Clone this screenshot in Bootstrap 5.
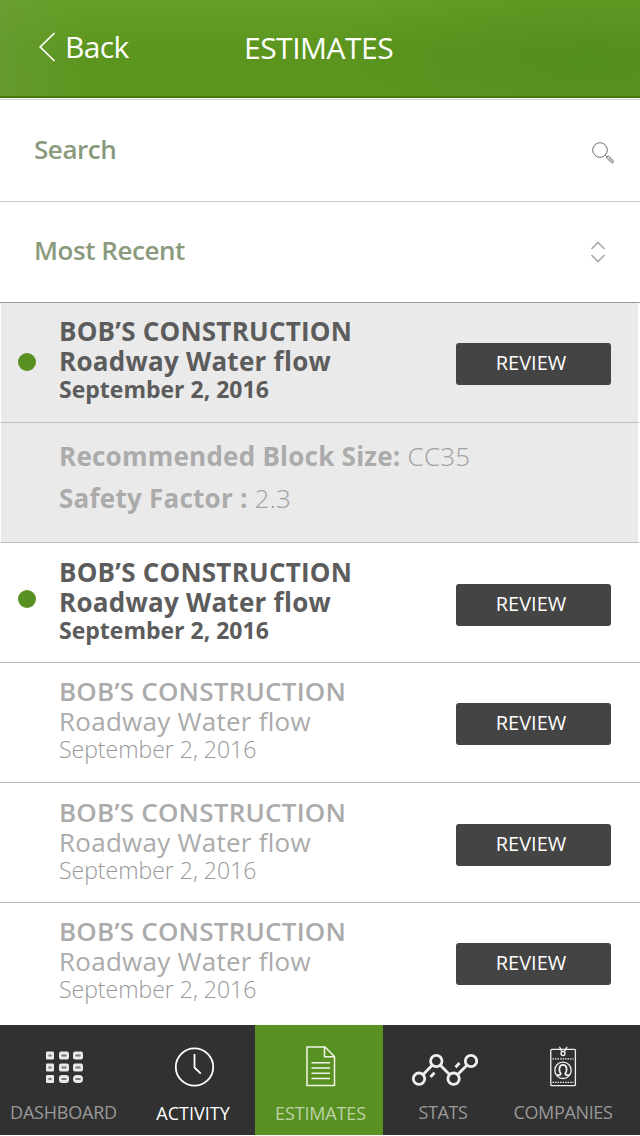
<!DOCTYPE html>
<html lang="en">
<head>
<meta charset="utf-8">
<meta name="viewport" content="width=device-width, initial-scale=1">
<title>Estimates</title>
<link href="https://cdn.jsdelivr.net/npm/bootstrap@5.3.0/dist/css/bootstrap.min.css" rel="stylesheet">
<style>
  body { font-family: "Open Sans", sans-serif; background: #fff; color: #5c5c5c; height: 1136px; overflow: hidden; }
  .topbar { height: 98px; color: #fff; border-bottom: 2px solid #437b10; padding: 0 0 2px 38px;
    background: radial-gradient(ellipse 260px 110px at 590px 60px, rgba(78,138,30,.6), rgba(78,138,30,0)), linear-gradient(90deg, rgba(110,158,58,.55), rgba(110,158,58,0) 90px), linear-gradient(180deg, #659f26, #5b951e 55%, #5d961f); }
  .back-link { width: 206px; color: #fff; font-size: 30px; line-height: 40px; letter-spacing: -.65px; }
  .back-link svg { margin-right: 9px; }
  .screen-title { font-size: 30px; line-height: 40px; letter-spacing: -.5px; font-weight: 400; padding-top: 2px; }
  .field-row { color: #8a9a7c; font-size: 26px; font-weight: 600; letter-spacing: -.45px; border-bottom: 1px solid #ccc; }
  .field-row.find { height: 103px; border-top: 1px solid #d0d0d0; margin-top: 1px; padding: 0 25px 3px 34px; }
  .field-row.find svg { margin-top: 8px; }
  .field-row.order { height: 101px; border-color: #999; padding: 0 33px 4px 34px; }
  .field-row.order svg { margin-top: 4px; }
  .job { height: 120px; padding: 13px 29px 0 59px; border-bottom: 1px solid #bbb; position: relative; color: #ababab; }
  .job.low { padding-top: 14px; }
  .job.tinted, .facts { background: #eaeaea; border-left: 1px solid #fff; border-right: 2px solid #fff; }
  .job.tinted { padding-left: 58px; padding-right: 27px; }
  .job.final { height: 122px; border: 0; }
  .job .firm { font-size: 26px; line-height: 30px; font-weight: 600; letter-spacing: .23px; }
  .job .task { font-size: 26px; line-height: 30px; letter-spacing: .26px; }
  .job .day { font-size: 23px; line-height: 26px; font-weight: 300; color: #989898; }
  .job.fresh, .job.fresh .day { color: #5c5c5c; font-weight: 700; }
  .job.fresh .firm { font-weight: 700; }
  .dot { position: absolute; left: 18px; top: 50px; width: 18px; height: 18px; border-radius: 50%; background: #589021; }
  .low .dot { top: 47px; }
  .tinted .dot { left: 17px; }
  .btn-review { width: 155px; height: 42px; margin-top: 27px; padding: 0 5px 2px 0; border: 0; border-radius: 3px; background: #444; color: #fff; font-size: 20px; line-height: 40px; }
  .btn-review:hover { background: #333; color: #fff; }
  .facts { height: 120px; padding: 12px 0 0 58px; font-size: 26px; line-height: 42px; letter-spacing: .24px; color: #ababab; border-bottom: 1px solid #bbb; }
  .facts span { color: #a0a0a0; }
  .tabs-bar { height: 111px; background: #313131; border-bottom: 1px solid #fff; }
  .tab { width: 128px; color: #999; font-size: 18px; line-height: 26px; text-decoration: none; padding-top: 17px; }
  .tab.narrow { width: 120px; }
  .tab svg { display: block; margin-bottom: 7px; }
  .tab:first-child { width: 127px; letter-spacing: -.2px; }
  .tab.narrow { letter-spacing: -.35px; }
  .tab.lit { color: #fff; }
  .tab.lit span, .tab.current span { position: relative; top: 1px; }
  .tab.current { background: #589021; color: #bdd3a7; padding-left: 3px; letter-spacing: -.15px; }
</style>
</head>
<body>
<header class="topbar d-flex align-items-center">
  <a href="#" class="back-link d-flex align-items-center text-decoration-none">
    <svg width="18" height="32" viewBox="0 0 18 32" fill="none" stroke="#fff" stroke-width="1.7"><path d="M16.5 2 2.2 16l14.300 14"/></svg><span>Back</span>
  </a>
  <h1 class="screen-title mb-0">ESTIMATES</h1>
</header>
<main>
  <div class="field-row find d-flex align-items-center justify-content-between">
    <span>Search</span>
    <svg width="24" height="24" viewBox="0 0 24 24" fill="none" stroke="#707070" stroke-width="1"><circle cx="9" cy="9" r="7.300"/><path d="m14.300 14.300 2.200 2.200"/><path d="m16 17.300 4.200 4.200q1.200.8 2-.1.700-1-.1-1.900L17.800 15.300q-1-.5-1.700.300-.6.800-.1 1.700zM17.500 16.800l3.800 3.900"/></svg>
  </div>
  <div class="field-row order d-flex align-items-center justify-content-between">
    <span>Most Recent</span>
    <svg width="18" height="22" viewBox="0 0 18 22" fill="none" stroke="#aaa" stroke-width="1.700"><path d="m2.500 8 6.500-6.500L15.500 8M2.500 14l6.500 6.500 6.500-6.500"/></svg>
  </div>
  <section class="job fresh tinted d-flex justify-content-between align-items-start">
    <span class="dot"></span>
    <div><div class="firm">BOB’S CONSTRUCTION</div><div class="task">Roadway Water flow</div><div class="day">September 2, 2016</div></div>
    <button class="btn btn-review">REVIEW</button>
  </section>
  <section class="facts">
    <div><b>Recommended Block Size:</b> <span class="fw-light">CC35</span></div>
    <div><b>Safety Factor :</b> <span class="fw-light">2.3</span></div>
  </section>
  <section class="job fresh low d-flex justify-content-between align-items-start">
    <span class="dot"></span>
    <div><div class="firm">BOB’S CONSTRUCTION</div><div class="task">Roadway Water flow</div><div class="day">September 2, 2016</div></div>
    <button class="btn btn-review">REVIEW</button>
  </section>
  <section class="job d-flex justify-content-between align-items-start">
    <div><div class="firm">BOB’S CONSTRUCTION</div><div class="task">Roadway Water flow</div><div class="day">September 2, 2016</div></div>
    <button class="btn btn-review">REVIEW</button>
  </section>
  <section class="job low d-flex justify-content-between align-items-start">
    <div><div class="firm">BOB’S CONSTRUCTION</div><div class="task">Roadway Water flow</div><div class="day">September 2, 2016</div></div>
    <button class="btn btn-review">REVIEW</button>
  </section>
  <section class="job final d-flex justify-content-between align-items-start">
    <div><div class="firm">BOB’S CONSTRUCTION</div><div class="task">Roadway Water flow</div><div class="day">September 2, 2016</div></div>
    <button class="btn btn-review">REVIEW</button>
  </section>
</main>
<nav class="tabs-bar d-flex">
  <a href="#" class="tab d-flex flex-column align-items-center">
    <svg width="40" height="50" viewBox="0 0 40 50"><g fill="#e9e9e9"><rect x="2" y="9.500" width="8" height="8" rx="1"/><rect x="15" y="9.500" width="10" height="8" rx="2"/><rect x="29" y="9.500" width="10" height="8" rx="2"/><rect x="2" y="21.500" width="8" height="8" rx="1"/><rect x="15" y="21.500" width="10" height="8" rx="2"/><rect x="29" y="21.500" width="10" height="8" rx="2"/><rect x="2" y="33" width="8" height="8" rx="1"/><rect x="15" y="33" width="10" height="8" rx="3"/><rect x="29" y="33" width="10" height="8" rx="4"/></g><path d="M4.500 13.500h3M17.500 13.500h5M31.500 13.500h5M4.500 25.500h3M17.500 25.500h5M31.500 25.500h5M4.500 37h3M17.500 37h5M31.500 37h5" stroke="#777" stroke-width="2"/></svg>
    <span>DASHBOARD</span>
  </a>
  <a href="#" class="tab lit d-flex flex-column align-items-center ps-1">
    <svg width="44" height="50" viewBox="0 0 44 50" fill="none" stroke="#fff" stroke-width="1.800"><circle cx="23.500" cy="25" r="18.700"/><path d="M23.500 12v13.500l6.300 6.200"/></svg>
    <span>ACTIVITY</span>
  </a>
  <a href="#" class="tab current d-flex flex-column align-items-center">
    <svg width="34" height="50" viewBox="0 0 34 50" fill="none" stroke="#f0f5ea" stroke-width="1.500"><path d="M3 5h18l9.500 9.500V43.500H3zM20.500 5v9.800h10M7.500 20.700H26M7.500 26H26M7.500 31.200H26M7.500 36.500H26"/></svg>
    <span>ESTIMATES</span>
  </a>
  <a href="#" class="tab narrow d-flex flex-column align-items-center">
    <svg width="70" height="50" viewBox="-2 0 70 50" fill="none" stroke="#efefef" stroke-width="2.800"><circle cx="9" cy="36.700" r="5.700"/><circle cx="26.300" cy="19" r="5.700"/><circle cx="43.600" cy="36.700" r="5.700"/><circle cx="61" cy="19" r="5.700"/><path d="m13.200 32.500 9-9.300M30.300 23.200l9.200 9.300M47.700 32.500l9.200-9.300M20.500 35l4-4.300M45.500 25.300l4-4.300"/></svg>
    <span>STATS</span>
  </a>
  <a href="#" class="tab narrow d-flex flex-column align-items-center">
    <svg width="30" height="50" viewBox="0 0 30 50" fill="none" stroke="#f0f0f0" stroke-width="1.300"><rect x="2.800" y="7.300" width="24.600" height="36.400" rx="1"/><path d="M4.500 16.800h21M4.500 40.300h21" stroke-dasharray="1.500 1"/><circle cx="15" cy="11.500" r="2"/><path d="m14 9.800-2.600-5M16.500 9.800l2.500-5"/><circle cx="15" cy="28.300" r="8.200"/><path d="M9 33.200q3.500 0 3.700-1.400c-2.300-3.500-1.800-9 2.300-9s4.600 5.500 2.300 9q.2 1.400 3.700 1.400" stroke-width="1.800"/></svg>
    <span>COMPANIES</span>
  </a>
</nav>
<script src="https://cdn.jsdelivr.net/npm/bootstrap@5.3.0/dist/js/bootstrap.bundle.min.js"></script>
</body>
</html>
